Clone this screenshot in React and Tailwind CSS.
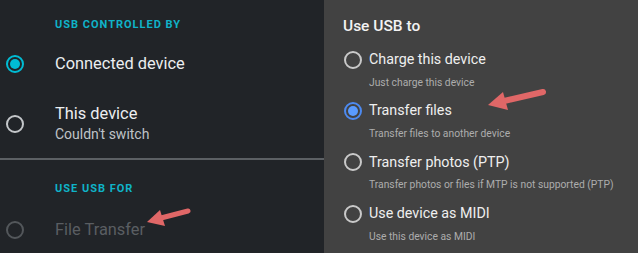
const font = { fontFamily: 'Roboto, "Noto Sans", sans-serif' };

const options = [
  { title: "Charge this device", sub: "Just charge this device", on: false },
  { title: "Transfer files", sub: "Transfer files to another device", on: true },
  { title: "Transfer photos (PTP)", sub: "Transfer photos or files if MTP is not supported (PTP)", on: false },
  { title: "Use device as MIDI", sub: "Use this device as MIDI", on: false },
];

const LeftRadio = ({ on, dim }) => (
  <div className="w-[48px] flex justify-start pl-[6px] shrink-0">
    {on ? (
      <div className="w-[18px] h-[18px] rounded-full border-2 border-[#00bcd4] flex items-center justify-center">
        <div className="w-[10px] h-[10px] rounded-full bg-[#00bcd4]" />
      </div>
    ) : (
      <div className={`w-[18px] h-[18px] rounded-full border-2 ${dim ? "border-[#53575b]" : "border-[#c4c7ca]"}`} />
    )}
  </div>
);

const RightRadio = ({ on }) =>
  on ? (
    <div className="w-[18px] h-[18px] rounded-full border-2 border-[#4d8af0] flex items-center justify-center shrink-0">
      <div className="w-[10px] h-[10px] rounded-full bg-[#5a9bff]" />
    </div>
  ) : (
    <div className="w-[18px] h-[18px] rounded-full border-2 border-[#c9c9c9] shrink-0" />
  );

export default function App() {
  return (
    <div className="relative w-[638px] h-[253px] flex overflow-hidden" style={font}>
      {/* left: android settings */}
      <div className="w-[324px] h-full bg-[#212428] flex flex-col">
        <div className="h-[50px] flex items-center pl-[55px] text-[11px] font-bold tracking-[1px] text-[#0fb3c8]">
          USB CONTROLLED BY
        </div>
        <div className="h-[28px] flex items-center">
          <LeftRadio on />
          <span className="pl-[7px] text-[16.4px] text-[#eceef0]">Connected device</span>
        </div>
        <div className="mt-[22px] h-[48px] flex items-center">
          <LeftRadio />
          <div className="pl-[7px] flex flex-col">
            <span className="text-[16.4px] leading-[20px] text-[#eceef0]">This device</span>
            <span className="text-[14px] leading-[20px] text-[#bfc3c7]">Couldn't switch</span>
          </div>
        </div>
        <div className="mt-[10px] h-[2px] bg-[#5c6064]" />
        <div className="h-[58px] flex items-center pl-[55px] text-[11px] font-bold tracking-[1px] text-[#0fb3c8]">
          USE USB FOR
        </div>
        <div className="h-[24px] flex items-center">
          <LeftRadio dim />
          <span className="pl-[7px] text-[16.4px] text-[#5a5e62]">File Transfer</span>
        </div>
      </div>

      {/* right: dialog */}
      <div className="flex-1 h-full bg-[#424242] pl-[19px] flex flex-col">
        <div className="pt-[10px] h-[46px] flex items-center text-[15.5px] font-medium text-[#f3f3f3]">
          Use USB to
        </div>
        <div className="mt-[5px] flex flex-col">
          {options.map((o) => (
            <div key={o.title} className="h-[51.3px] flex flex-col">
              <div className="h-[24px] flex items-center gap-[7px] pl-[1px]">
                <RightRadio on={o.on} />
                <span className="text-[14.3px] text-[#efefef]">{o.title}</span>
              </div>
              <div className="h-[20px] pt-[1px] leading-[20px] pl-[26px] text-[10.3px] text-[#adadad]">{o.sub}</div>
            </div>
          ))}
        </div>
      </div>

      {/* annotation arrows */}
      <svg className="absolute inset-0 pointer-events-none" width="638" height="253" viewBox="0 0 638 253">
        <line x1="543" y1="92" x2="504" y2="101" stroke="#e06767" strokeWidth="6" strokeLinecap="round" />
        <polygon points="488,105 503,92 508,110" fill="#e06767" />
        <line x1="188" y1="211" x2="161" y2="218" stroke="#e06767" strokeWidth="5" strokeLinecap="round" />
        <polygon points="147,222 160,210 165,226" fill="#e06767" />
      </svg>
    </div>
  );
}
